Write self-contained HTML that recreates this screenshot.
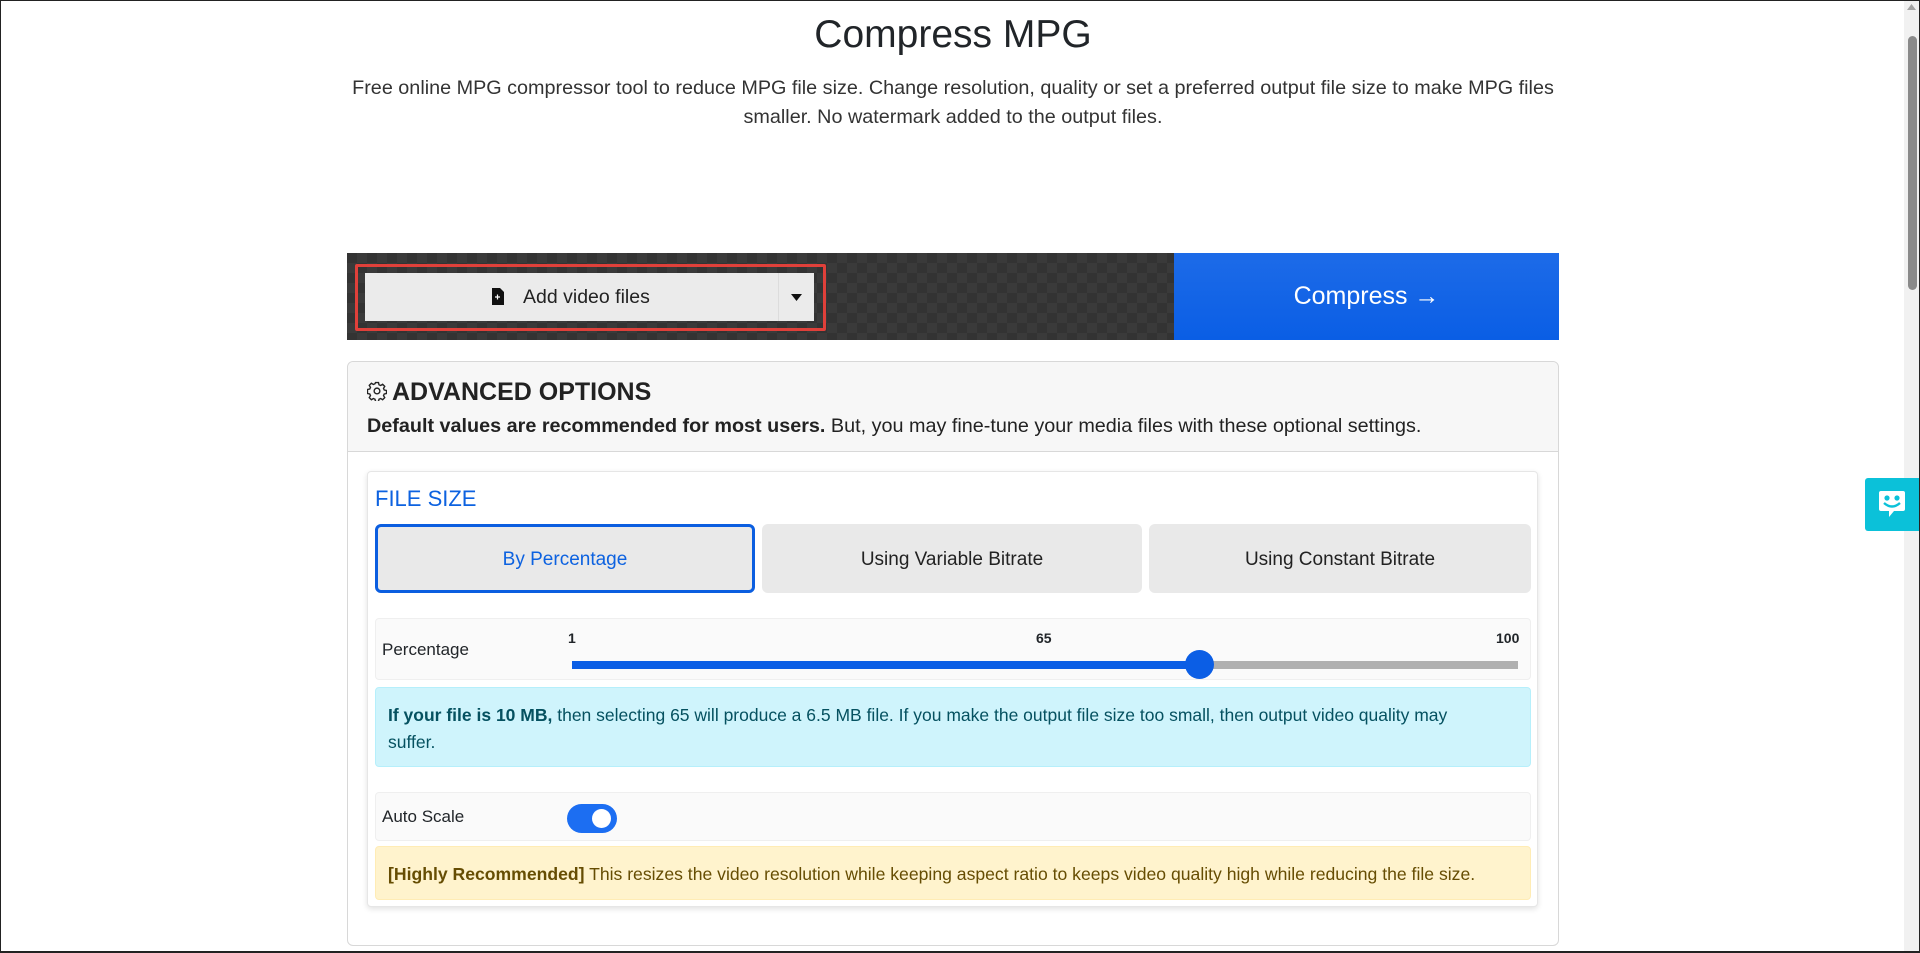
<!DOCTYPE html>
<html><head><meta charset="utf-8"><style>
*{box-sizing:border-box;margin:0;padding:0}
html,body{width:1920px;height:953px;overflow:hidden;background:#fff;font-family:"Liberation Sans",sans-serif;color:#212529}
.frame{position:absolute;left:0;top:0;width:1920px;height:953px;border:1px solid #222;border-bottom:2px solid #222}
.abs{position:absolute}
h1{position:absolute;left:0;width:1906px;top:13px;text-align:center;font-weight:400;font-size:39px;color:#212529}
.desc{position:absolute;left:340px;width:1226px;top:74px;text-align:center;font-size:19.8px;line-height:29px;color:#333}
.bar{left:347px;top:253px;width:827px;height:87px;background-color:#333;background-image:linear-gradient(45deg,#3a3a3a 25%,transparent 25%,transparent 75%,#3a3a3a 75%),linear-gradient(45deg,#3a3a3a 25%,transparent 25%,transparent 75%,#3a3a3a 75%);background-size:20px 20px;background-position:0 0,10px 10px}
.red{left:355px;top:264px;width:471px;height:67px;border:3px solid #e0403a;border-radius:2px}
.btn{left:365px;top:273px;width:449px;height:48px;background:#ebebeb;font-size:19.5px;color:#222}
.comp{left:1174px;top:253px;width:385px;height:87px;background:linear-gradient(#1d6be8,#0a5ee5);color:#fff;font-size:25px;text-align:center;line-height:87px}
.card{left:347px;top:361px;width:1212px;height:585px;border:1px solid #d8d8d8;border-radius:6px;background:#fff}
.cardh{left:348px;top:362px;width:1210px;height:90px;background:#f7f7f7;border-bottom:1px solid #d8d8d8;border-radius:6px 6px 0 0}
.inner{left:367px;top:471px;width:1171px;height:436px;border:1px solid #e6e6e6;border-radius:4px;box-shadow:0 2px 6px rgba(0,0,0,.12);background:#fff}
.tab{top:524px;height:69px;background:#e9e9e9;border-radius:6px;font-size:19px;text-align:center;line-height:69px;color:#222}
.row{left:375px;width:1156px;background:#fafafa;border:1px solid #efefef;border-radius:4px}
</style></head><body>
<div class="frame"></div>
<h1>Compress MPG</h1>
<div class="desc">Free online MPG compressor tool to reduce MPG file size. Change resolution, quality or set a preferred output file size to make MPG files smaller. No watermark added to the output files.</div>

<div class="abs bar"></div>
<div class="abs red"></div>
<div class="abs btn">
  <svg class="abs" style="left:127px;top:15px" width="13" height="17" viewBox="0 0 13 17"><path d="M0 0H8L12 4V17H0Z" fill="#111"/><path d="M3 9H8M5.5 6.5V11.5" stroke="#fff" stroke-width="1.2"/></svg>
  <span class="abs" style="left:158px;top:13px">Add video files</span>
  <div class="abs" style="left:413px;top:0;width:1px;height:48px;background:#dcdcdc"></div>
  <svg class="abs" style="left:426px;top:21px" width="11" height="7"><path d="M0 0H11L5.5 7Z" fill="#111"/></svg>
</div>
<div class="abs comp">Compress →</div>

<div class="abs card"></div>
<div class="abs cardh"></div>
<svg class="abs" style="left:367px;top:381px" width="20" height="20" viewBox="0 0 16 16" fill="none" stroke="#222" stroke-width="1.1"><circle cx="8" cy="8" r="2.3"/><path d="M6.8 1.2h2.4l.4 1.8 1.3.6 1.6-1 1.7 1.7-1 1.6.6 1.3 1.8.4v2.4l-1.8.4-.6 1.3 1 1.6-1.7 1.7-1.6-1-1.3.6-.4 1.8H6.8l-.4-1.8-1.3-.6-1.6 1-1.7-1.7 1-1.6-.6-1.3-1.8-.4V6.8l1.8-.4.6-1.3-1-1.6 1.7-1.7 1.6 1 1.3-.6z"/></svg>
<div class="abs" style="left:392px;top:378px;font-size:25px;font-weight:700;color:#222">ADVANCED OPTIONS</div>
<div class="abs" style="left:367px;top:415px;font-size:19.8px;color:#222"><b>Default values are recommended for most users.</b> But, you may fine-tune your media files with these optional settings.</div>

<div class="abs inner"></div>
<div class="abs" style="left:375px;top:486px;font-size:22px;color:#0d62e0">FILE SIZE</div>
<div class="abs tab" style="left:375px;width:380px;border:3px solid #0b5ee0;color:#0d62e0;line-height:65px">By Percentage</div>
<div class="abs tab" style="left:762px;width:380px;line-height:71px">Using Variable Bitrate</div>
<div class="abs tab" style="left:1149px;width:382px;line-height:71px">Using Constant Bitrate</div>

<div class="abs row" style="top:618px;height:62px"></div>
<div class="abs" style="left:382px;top:640px;font-size:17px">Percentage</div>
<div class="abs" style="left:568px;top:630px;font-size:14px;font-weight:700">1</div>
<div class="abs" style="left:1036px;top:630px;font-size:14px;font-weight:700">65</div>
<div class="abs" style="left:1496px;top:630px;font-size:14px;font-weight:700">100</div>
<div class="abs" style="left:572px;top:661px;width:946px;height:8px;background:#b0b0b0"></div>
<div class="abs" style="left:572px;top:661px;width:628px;height:8px;background:#0b5ee5"></div>
<div class="abs" style="left:1185px;top:650px;width:29px;height:29px;border-radius:50%;background:#0b5ee5"></div>

<div class="abs" style="left:375px;top:687px;width:1156px;height:80px;background:#cff4fc;border:1px solid #b6effb;border-radius:4px;color:#055160;font-size:17.5px;line-height:27px;padding:14px 60px 14px 12px">
<b>If your file is 10 MB,</b> then selecting 65 will produce a 6.5 MB file. If you make the output file size too small, then output video quality may suffer.</div>

<div class="abs row" style="top:792px;height:49px"></div>
<div class="abs" style="left:382px;top:807px;font-size:17px">Auto Scale</div>
<div class="abs" style="left:567px;top:804px;width:50px;height:29px;border-radius:15px;background:#1c6ef2"></div>
<div class="abs" style="left:592px;top:809px;width:19px;height:19px;border-radius:50%;background:#fff"></div>

<div class="abs" style="left:375px;top:846px;width:1156px;height:54px;background:#fff3cd;border:1px solid #ffecb5;border-radius:4px;color:#664d03;font-size:17.6px;line-height:54px;padding:0 12px"><b>[Highly Recommended]</b> This resizes the video resolution while keeping aspect ratio to keeps video quality high while reducing the file size.</div>

<div class="abs" style="left:1904px;top:1px;width:15px;height:950px;background:#f1f1f1"></div>
<svg class="abs" style="left:1907px;top:4px" width="9" height="6"><path d="M0 6L4.5 0 9 6Z" fill="#a3a3a3"/></svg>
<div class="abs" style="left:1908px;top:36px;width:9px;height:254px;border-radius:5px;background:#8a8a8a"></div>
<div class="abs" style="left:1865px;top:478px;width:54px;height:53px;background:#0bc1d9;border-radius:3px 0 0 3px"></div>
<svg class="abs" style="left:1877px;top:489px" width="30" height="30" viewBox="0 0 30 30"><path d="M4 2H26Q28 2 28 4V20Q28 22 26 22H17L12 28V22H4Q2 22 2 20V4Q2 2 4 2Z" fill="#fff"/><circle cx="10" cy="9" r="2.6" fill="#0bc1d9"/><circle cx="20" cy="9" r="2.6" fill="#0bc1d9"/><path d="M7 14Q15 21 23 14" stroke="#0bc1d9" stroke-width="2.4" fill="none"/></svg>
</body></html>
